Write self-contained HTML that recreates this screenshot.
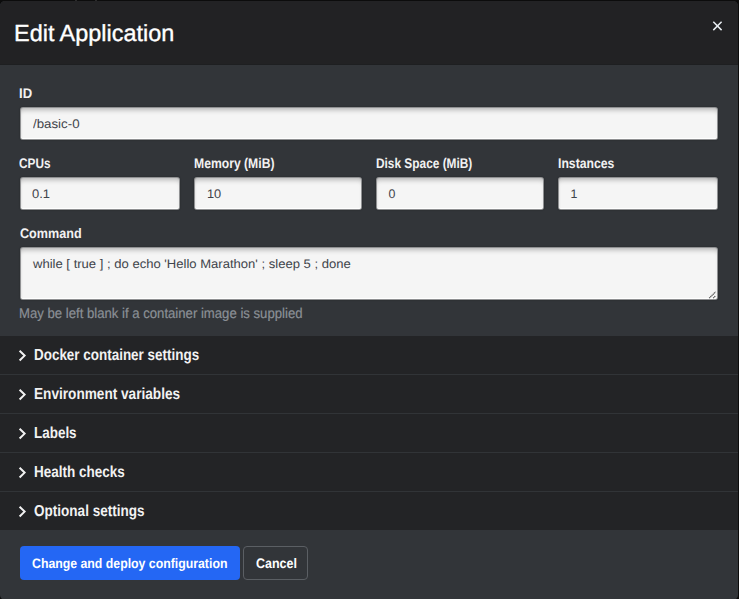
<!DOCTYPE html>
<html><head><meta charset="utf-8">
<style>
*{box-sizing:border-box;margin:0;padding:0}
html,body{width:739px;height:599px;overflow:hidden;background:#0c0c0c;font-family:"Liberation Sans",sans-serif}
#modal{position:absolute;left:0;top:1px;width:738px;height:599px;border-radius:5px;overflow:hidden;background:#323539}
.t{position:absolute;white-space:nowrap;line-height:1;transform-origin:0 0;text-rendering:geometricPrecision}
#hdr{position:absolute;left:0;top:0;width:738px;height:64px;background:#222224;border-bottom:1px solid #1e1f21}
#close{position:absolute;left:706px;top:12.5px;width:22px;height:22px}
.ttl{color:#ffffff;-webkit-text-stroke:0.35px #ffffff}
.lbl{font-weight:bold;color:#f2f2f2}
.inp{position:absolute;background:#f5f5f5;border-radius:2px;box-shadow:0 0 0 1px rgba(225,225,225,.55), 0 0 1px 2px rgba(0,0,0,.08), inset 0 -1px 0 #fff, inset 0 5px 5px -3px rgba(0,0,0,.26), inset 1px 0 2px -1px rgba(0,0,0,.1)}
.val{color:#3f444b}
.help{color:#8b9096;-webkit-text-stroke:0.2px #8b9096}
.acc{position:absolute;left:0;width:738px;height:38px;background:#232426}
.accb{position:absolute;left:0;width:738px;height:1px;background:#313437}
.acct{font-weight:bold;color:#f2f2f2}
.chev{position:absolute;left:15px;width:16px;height:20px}
#btn1{position:absolute;left:20px;top:545px;width:220px;height:34px;background:#2467f4;border-radius:4px}
#btn2{position:absolute;left:243px;top:545px;width:65px;height:34px;border:1px solid #5b5f64;border-radius:4px}
.btnt{font-weight:bold;color:#fff}
</style></head><body>
<div style="position:absolute;left:75px;top:0;width:2px;height:1px;background:#2b2b2b"></div><div style="position:absolute;left:95px;top:0;width:2px;height:1px;background:#2b2b2b"></div>
<div id="modal">
<div id="hdr"></div>
<div class="t ttl" style="left:14.45px;top:21.38px;font-size:23.3px;transform:scaleX(1.0061)">Edit Application</div>
<svg id="close" viewBox="0 0 22 22"><path d="M7.3 7.8L15.6 16.1M15.6 7.8L7.3 16.1" stroke="#e8edf2" stroke-width="1.5" stroke-linecap="butt"/></svg>
<div class="t lbl" style="left:19.48px;top:85.34px;font-size:14px;transform:scaleX(0.9359)">ID</div>
<div class="inp" style="left:21px;top:107px;width:696px;height:31px"></div>
<div class="t val" style="left:33.09px;top:117.15px;font-size:12.4px;transform:scaleX(1.0728)">/basic-0</div>
<div class="t lbl" style="left:19.33px;top:154.97px;font-size:14px;transform:scaleX(0.8445)">CPUs</div>
<div class="t lbl" style="left:194.33px;top:155.00px;font-size:14px;transform:scaleX(0.8695)">Memory (MiB)</div>
<div class="t lbl" style="left:375.83px;top:154.99px;font-size:14px;transform:scaleX(0.8478)">Disk Space (MiB)</div>
<div class="t lbl" style="left:557.73px;top:155.03px;font-size:14px;transform:scaleX(0.8726)">Instances</div>
<div class="inp" style="left:21px;top:177px;width:158px;height:31px"></div>
<div class="inp" style="left:195px;top:177px;width:166px;height:31px"></div>
<div class="inp" style="left:377px;top:177px;width:166px;height:31px"></div>
<div class="inp" style="left:559px;top:177px;width:158px;height:31px"></div>
<div class="t val" style="left:32.32px;top:186.80px;font-size:12.4px;transform:scaleX(1.0457)">0.1</div>
<div class="t val" style="left:206.95px;top:186.58px;font-size:12.4px;transform:scaleX(1.0339)">10</div>
<div class="t val" style="left:388.57px;top:186.80px;font-size:12.4px;transform:scaleX(1.0000)">0</div>
<div class="t val" style="left:570.57px;top:186.66px;font-size:12.4px;transform:scaleX(1.0000)">1</div>
<div class="t lbl" style="left:20.09px;top:226.21px;font-size:13.8px;transform:scaleX(0.9134)">Command</div>
<div class="inp" style="left:21px;top:247px;width:696px;height:51px"></div>
<div class="t val" style="left:33.09px;top:256.89px;font-size:12.4px;transform:scaleX(1.0535)">while [ true ] ; do echo 'Hello Marathon' ; sleep 5 ; done</div>
<svg style="position:absolute;left:700px;top:282px;width:24px;height:22px" viewBox="0 0 24 22"><path d="M9.2 15.2L15.6 8.8M13.2 15.2L15.6 12.8" stroke="#4d4d4d" stroke-width="1.2" stroke-dasharray="1.2 0.5"/></svg>
<div class="t help" style="left:19.47px;top:306.05px;font-size:14.2px;transform:scaleX(0.9265)">May be left blank if a container image is supplied</div>
<div class="acc" style="top:335px"></div><div class="accb" style="top:373px"></div>
<div class="acc" style="top:374px"></div><div class="accb" style="top:412px"></div>
<div class="acc" style="top:413px"></div><div class="accb" style="top:451px"></div>
<div class="acc" style="top:452px"></div><div class="accb" style="top:490px"></div>
<div class="acc" style="top:491px"></div>
<svg class="chev" style="top:344px" viewBox="0 0 16 20"><path d="M4.6 5.7L9.6 10.6L4.6 15.5" stroke="#f2f2f2" stroke-width="2" fill="none"/></svg><svg class="chev" style="top:383px" viewBox="0 0 16 20"><path d="M4.6 5.7L9.6 10.6L4.6 15.5" stroke="#f2f2f2" stroke-width="2" fill="none"/></svg><svg class="chev" style="top:422px" viewBox="0 0 16 20"><path d="M4.6 5.7L9.6 10.6L4.6 15.5" stroke="#f2f2f2" stroke-width="2" fill="none"/></svg><svg class="chev" style="top:461px" viewBox="0 0 16 20"><path d="M4.6 5.7L9.6 10.6L4.6 15.5" stroke="#f2f2f2" stroke-width="2" fill="none"/></svg><svg class="chev" style="top:500px" viewBox="0 0 16 20"><path d="M4.6 5.7L9.6 10.6L4.6 15.5" stroke="#f2f2f2" stroke-width="2" fill="none"/></svg>
<div class="t acct" style="left:34.20px;top:347.14px;font-size:15.9px;transform:scaleX(0.8460)">Docker container settings</div>
<div class="t acct" style="left:34.20px;top:385.75px;font-size:15.9px;transform:scaleX(0.8573)">Environment variables</div>
<div class="t acct" style="left:34.20px;top:424.86px;font-size:15.9px;transform:scaleX(0.8461)">Labels</div>
<div class="t acct" style="left:34.20px;top:464.14px;font-size:15.9px;transform:scaleX(0.8501)">Health checks</div>
<div class="t acct" style="left:34.07px;top:503.00px;font-size:15.9px;transform:scaleX(0.8520)">Optional settings</div>
<div id="btn1"></div>
<div class="t btnt" style="left:32.33px;top:555.72px;font-size:13.7px;transform:scaleX(0.8985)">Change and deploy configuration</div>
<div id="btn2"></div>
<div class="t btnt" style="left:255.66px;top:556.02px;font-size:13.8px;transform:scaleX(0.9052)">Cancel</div>
</div>
</body></html>
